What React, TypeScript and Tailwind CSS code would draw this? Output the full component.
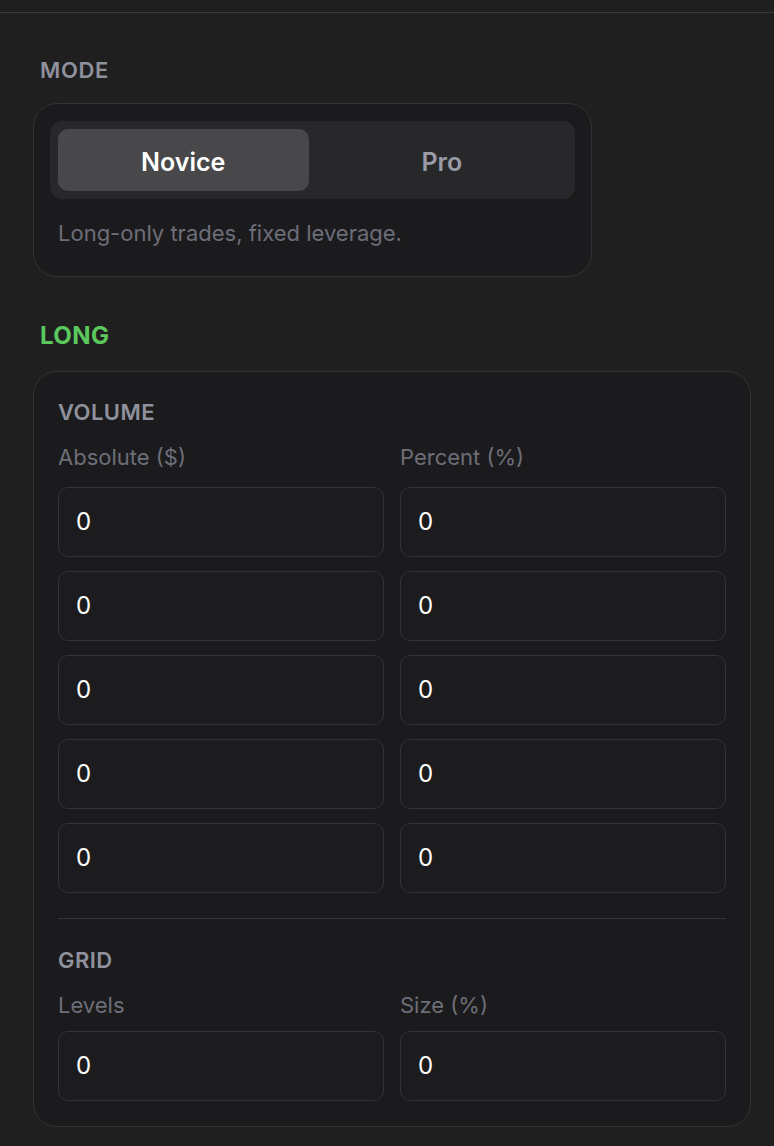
import { useState } from 'react';

const volumeRows = [0, 1, 2, 3, 4];

function NumberField({ value }: { value: string }) {
  return (
    <div className="h-[70px] rounded-[10px] border border-[#343437] bg-[#1c1c1e] px-[17px] flex items-center">
      <span className="text-[24px] text-white leading-none">{value}</span>
    </div>
  );
}

export default function App() {
  const [mode, setMode] = useState<'novice' | 'pro'>('novice');

  return (
    <div
      className="min-h-screen w-[774px] bg-[#1f1f20] overflow-hidden"
      style={{ fontFamily: 'Inter, "Noto Sans", sans-serif' }}
    >
      <div className="h-3" />
      <div className="h-px bg-[#38383b]" />

      <div className="pl-[33px] w-[751px]">
        {/* Mode */}
        <h3 className="mt-[43px] pl-[7px] text-[22px] leading-[28px] font-semibold tracking-[0.03em] text-[#8f919c]">
          MODE
        </h3>
        <div className="mt-[19px] w-[559px] rounded-[24px] border border-[#333336] bg-[#1b1b1d] pt-[17px] px-4 pb-[30px]">
          <div className="grid grid-cols-2 gap-2 rounded-[12px] bg-[#28282b] p-2">
            <button
              onClick={() => setMode('novice')}
              className={`h-[62px] rounded-[10px] text-[25px] leading-[30px] pt-1 font-semibold ${
                mode === 'novice' ? 'bg-[#48484b] text-white' : 'text-[#9a9ba6]'
              }`}
            >
              Novice
            </button>
            <button
              onClick={() => setMode('pro')}
              className={`h-[62px] rounded-[10px] text-[25px] leading-[30px] pt-1 font-semibold ${
                mode === 'pro' ? 'bg-[#48484b] text-white' : 'text-[#9a9ba6]'
              }`}
            >
              Pro
            </button>
          </div>
          <p className="mt-[21px] px-2 text-[22px] leading-[26px] text-[#6d6e78]">
            Long-only trades, fixed leverage.
          </p>
        </div>

        {/* Long */}
        <h3 className="mt-[44px] pl-[7px] text-[24px] leading-[30px] font-bold tracking-[0.02em] text-[#5bc85e]">
          LONG
        </h3>
        <div className="mt-5 rounded-[24px] border border-[#333336] bg-[#1b1b1d] px-6 pt-[26px] pb-[25px]">
          <h4 className="text-[22px] leading-[28px] font-semibold tracking-[0.02em] text-[#8f919c]">VOLUME</h4>
          <div className="mt-[18px] grid grid-cols-2 gap-x-4">
            <span className="text-[22px] leading-[26px] text-[#6d6e78]">Absolute ($)</span>
            <span className="text-[22px] leading-[26px] text-[#6d6e78]">Percent (%)</span>
          </div>
          <div className="mt-[17px] grid grid-cols-2 gap-x-4 gap-y-[14px]">
            {volumeRows.map(i => (
              <div key={i} className="contents">
                <NumberField value="0" />
                <NumberField value="0" />
              </div>
            ))}
          </div>

          <div className="mt-[25px] h-px bg-[#343437]" />

          <h4 className="mt-[27px] text-[22px] leading-[28px] font-semibold tracking-[0.02em] text-[#8f919c]">GRID</h4>
          <div className="mt-[18px] grid grid-cols-2 gap-x-4">
            <span className="text-[22px] leading-[26px] text-[#6d6e78]">Levels</span>
            <span className="text-[22px] leading-[26px] text-[#6d6e78]">Size (%)</span>
          </div>
          <div className="mt-[13px] grid grid-cols-2 gap-x-4">
            <NumberField value="0" />
            <NumberField value="0" />
          </div>
        </div>
      </div>
    </div>
  );
}
